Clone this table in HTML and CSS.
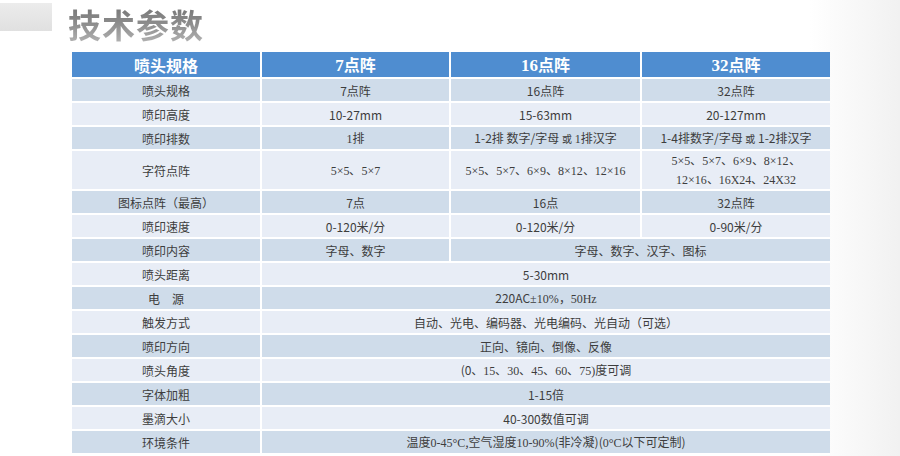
FILE: index.html
```html
<!DOCTYPE html>
<html lang="zh-CN">
<head>
<meta charset="utf-8">
<title>技术参数</title>
<link rel="stylesheet" href="styles.css">
</head>
<body>
<div class="page">
  <div class="heading">
    <div class="bar"></div>
    <h1 class="title">技术参数</h1>
  </div>
  <table class="spec">
    <colgroup>
      <col class="c1"><col class="c2"><col class="c3"><col class="c4">
    </colgroup>
    <thead>
      <tr class="head">
        <th>喷头规格</th>
        <th><span class="sf">7</span>点阵</th>
        <th><span class="sf">16</span>点阵</th>
        <th><span class="sf">32</span>点阵</th>
      </tr>
    </thead>
    <tbody>
      <tr class="d"><td>喷头规格</td><td>7点阵</td><td>16点阵</td><td>32点阵</td></tr>
      <tr class="l"><td>喷印高度</td><td>10-27mm</td><td>15-63mm</td><td>20-127mm</td></tr>
      <tr class="d"><td>喷印排数</td><td><span class="sf">1</span>排</td><td>1-2排 数字/字母 <span class="sm">或</span> <span class="sf">1</span>排汉字</td><td>1-4排数字/字母 <span class="sm">或</span> 1-2排汉字</td></tr>
      <tr class="l tall"><td>字符点阵</td><td><span class="sf">5×5、5×7</span></td><td><span class="sf">5×5、5×7、6×9、8×12、12×16</span></td><td><span class="sf">5×5、5×7、6×9、8×12、<br>12×16、16X24、24X32</span></td></tr>
      <tr class="d"><td>图标点阵（最高）</td><td>7点</td><td>16点</td><td>32点阵</td></tr>
      <tr class="l"><td>喷印速度</td><td>0-120米/分</td><td>0-120米/分</td><td>0-90米/分</td></tr>
      <tr class="d"><td>喷印内容</td><td>字母、数字</td><td colspan="2">字母、数字、汉字、图标</td></tr>
      <tr class="l"><td>喷头距离</td><td colspan="3">5-30mm</td></tr>
      <tr class="d"><td>电　源</td><td colspan="3">220AC<span class="sf">±10%，50Hz</span></td></tr>
      <tr class="l"><td>触发方式</td><td colspan="3">自动、光电、编码器、光电编码、光自动（可选）</td></tr>
      <tr class="d"><td>喷印方向</td><td colspan="3">正向、镜向、倒像、反像</td></tr>
      <tr class="l"><td>喷头角度</td><td colspan="3">(0、<span class="sf">15、30、45、60、75)</span>度可调</td></tr>
      <tr class="d"><td>字体加粗</td><td colspan="3">1-15倍</td></tr>
      <tr class="l"><td>墨滴大小</td><td colspan="3">40-300数值可调</td></tr>
      <tr class="d"><td>环境条件</td><td colspan="3">温度<span class="sf">0-45°C</span>,空气湿度<span class="sf">10-90%</span>(非冷凝)(<span class="sf">0°C</span>以下可定制)</td></tr>
    </tbody>
  </table>
</div>
</body>
</html>
```

FILE: styles.css
```css
html, body {
  margin: 0;
  padding: 0;
}

body {
  width: 900px;
  height: 456px;
  overflow: hidden;
  background: linear-gradient(90deg, #ffffff 0%, #ffffff 90%, #f1f1f1 100%);
  font-family: "Noto Sans CJK SC", "Noto Sans", sans-serif;
  color: #3d3d3d;
}

.page {
  display: flex;
  flex-direction: column;
}

.heading {
  display: flex;
  align-items: flex-start;
  gap: 16px;
  height: 40px;
}

.bar {
  width: 52px;
  height: 28px;
  margin-top: 3px;
  background: linear-gradient(180deg, #ececec, #e0e0e0);
}

.title {
  margin: 0;
  padding-top: 4px;
  font-size: 33px;
  line-height: 40px;
  font-weight: 700;
  letter-spacing: 1px;
  background: linear-gradient(180deg, #6f6f6f 0%, #8a8a8a 50%, #b4b4b4 100%);
  -webkit-background-clip: text;
  background-clip: text;
  color: transparent;
}

.spec {
  margin: 12px 0 0 72px;
  width: 758px;
  border-collapse: collapse;
  table-layout: fixed;
  font-size: 12px;
}

.c1 { width: 189px; }
.c2 { width: 189px; }
.c3 { width: 191px; }
.c4 { width: 189px; }

.spec th,
.spec td {
  padding: 0;
  text-align: center;
  vertical-align: middle;
  border-right: 2px solid #ffffff;
  border-bottom: 2px solid #ffffff;
  line-height: 17px;
}

.spec th:last-child,
.spec td:last-child {
  border-right: none;
}

.head th {
  height: 25px;
  background: #4f8dd0;
  color: #ffffff;
  font-size: 16px;
  font-weight: 700;
  line-height: 20px;
}

.head .sf {
  font-size: 17px;
}

.spec tbody tr td {
  height: 22px;
}

.spec tbody tr.tall td {
  height: 37px;
}

tr.d td { background: #cfdcea; }
tr.l td { background: #e8edf6; }

.sf {
  font-family: "Liberation Serif", "DejaVu Serif", serif;
}

.sm {
  font-size: 10px;
}
```
